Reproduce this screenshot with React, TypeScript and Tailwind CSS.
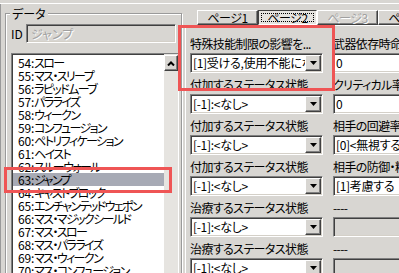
import React from 'react';

const listItems = [
  '54:スロー',
  '55:マス・スリープ',
  '56:ラピッドムーブ',
  '57:パラライズ',
  '58:ウィークン',
  '59:コンフュージョン',
  '60:ペトリフィケーション',
  '61:ヘイスト',
  '62:スルーウォール',
  '63:ジャンプ',
  '64:キャストブロック',
  '65:エンチャンテッドウェポン',
  '66:マス・マジックシールド',
  '67:マス・スロー',
  '68:マス・パラライズ',
  '69:マス・ウィークン',
  '70:マス・コンフュージョン',
];

type Field = { label: string; kind: 'combo' | 'input' | 'disabled'; value?: string };

const rows: [Field, Field][] = [
  [
    { label: '特殊技能制限の影響を...', kind: 'combo', value: '[1]受ける,使用不能になる' },
    { label: '武器依存時命中率', kind: 'input', value: '0' },
  ],
  [
    { label: '付加するステータス状態', kind: 'combo', value: '[-1]:<なし>' },
    { label: 'クリティカル率[%]', kind: 'input', value: '0' },
  ],
  [
    { label: '付加するステータス状態', kind: 'combo', value: '[-1]:<なし>' },
    { label: '相手の回避率を考慮', kind: 'combo', value: '[0]<無視する>' },
  ],
  [
    { label: '付加するステータス状態', kind: 'combo', value: '[-1]:<なし>' },
    { label: '相手の防御・精神力', kind: 'combo', value: '[1]考慮する' },
  ],
  [
    { label: '治療するステータス状態', kind: 'combo', value: '[-1]:<なし>' },
    { label: '----', kind: 'disabled' },
  ],
  [
    { label: '治療するステータス状態', kind: 'combo', value: '[-1]:<なし>' },
    { label: '----', kind: 'disabled' },
  ],
];

const sunken =
  'border border-t-[#808080] border-l-[#808080] border-r-white border-b-white shadow-[inset_1px_1px_0_#404040,inset_-1px_-1px_0_#d4d0c8]';
const raised =
  'border border-t-white border-l-white border-r-[#404040] border-b-[#404040] shadow-[inset_-1px_-1px_0_#808080]';

function DropButton() {
  return (
    <div className={`w-[16px] h-[16px] shrink-0 bg-[#d8d6d2] flex items-center justify-center ${raised}`}>
      <svg width="7" height="4" viewBox="0 0 7 4">
        <path d="M0 0 H7 L3.5 4 Z" fill="#000" />
      </svg>
    </div>
  );
}

function Control({ field }: { field: Field }) {
  if (field.kind === 'disabled') {
    return <div className={`h-[20px] bg-[#d8d6d2] ${sunken}`} />;
  }
  return (
    <div className={`h-[20px] flex items-center bg-white pl-[2px] pr-[1px] ${sunken}`}>
      <span className="flex-1 min-w-0 overflow-hidden whitespace-nowrap leading-[16px] tracking-[-0.3px]">
        {field.value}
      </span>
      {field.kind === 'combo' && <DropButton />}
    </div>
  );
}

function Tab({ label, state }: { label: string; state: 'normal' | 'pressed' | 'disabled' }) {
  if (state === 'pressed') {
    return (
      <div className="w-[59px] h-[15px] shrink-0 p-[2px] bg-[#e6e4e0] border border-t-[#404040] border-l-[#404040] border-r-white border-b-white">
        <div className="h-full border border-dotted border-black flex items-center justify-center leading-[11px] tracking-[-0.5px]">
          {label}
        </div>
      </div>
    );
  }
  return (
    <div
      className={`w-[61px] h-[15px] shrink-0 flex items-center justify-center leading-[13px] tracking-[-0.5px] bg-[#d8d6d2] ${raised} ${
        state === 'disabled' ? 'text-[#a0a0a0] [text-shadow:1px_1px_0_white]' : ''
      }`}
    >
      {label}
    </div>
  );
}

export default function App() {
  return (
    <div className="relative w-[399px] h-[273px] overflow-hidden bg-[#d8d6d2] pt-[3px] text-[12px] text-black font-['Noto_Sans_CJK_JP','Noto_Sans',sans-serif] [font-feature-settings:'palt']">
      <div className="flex h-[270px] border-t border-white">
        {/* left: data list */}
        <div className="w-[184px] shrink-0 border-l border-[#9a9a9a]">
          <fieldset className="mt-[1px] ml-[4px] w-[177px] h-[300px] border border-[#9a9a9a] shadow-[inset_1px_1px_0_white,1px_1px_0_white]">
            <legend className="ml-[4px] px-[2px] leading-[17px] bg-[#d8d6d2]">データ</legend>
            <div className="mt-[2px] flex items-center">
              <span className="ml-[5px] w-[15px] leading-[19px]">ID</span>
              <div className={`w-[150px] h-[19px] flex items-center pl-[4px] text-[#a0a0a0] [text-shadow:1px_1px_0_white] ${sunken}`}>
                ジャンプ
              </div>
            </div>
            <div className={`mt-[10px] ml-[5px] w-[168px] h-[230px] flex bg-white ${sunken}`}>
              <div className="flex-1 pt-[2px] pl-[1px] overflow-hidden">
                {listItems.map((item) => {
                  const [num, name] = item.split(':');
                  return (
                    <div
                      key={item}
                      className={`h-[13px] leading-[13px] pl-[5px] whitespace-nowrap ${
                        num === '63' ? 'bg-[#a7aab5]' : ''
                      }`}
                    >
                      <span className="tracking-[-0.2px]">{num}:</span>
                      <span className="tracking-[-1.6px]">{name}</span>
                    </div>
                  );
                })}
              </div>
              <div className="w-[14px] shrink-0 bg-[#e6e4e0] pt-[1px]">
                <div className={`w-[14px] h-[16px] bg-[#d8d6d2] flex items-center justify-center ${raised}`}>
                  <svg width="8" height="5" viewBox="0 0 8 5">
                    <path d="M1 4.5 L4 1.5 L7 4.5" fill="none" stroke="#000" strokeWidth="2" />
                  </svg>
                </div>
              </div>
            </div>
          </fieldset>
        </div>

        {/* right: pages */}
        <div className="flex-1 min-w-0 flex flex-col overflow-hidden">
          <div className="h-[21px] pt-[6px] pl-[13px] flex">
            <Tab label="ページ1" state="normal" />
            <Tab label="ページ2" state="pressed" />
            <Tab label="ページ3" state="disabled" />
            <Tab label="ページ4" state="normal" />
          </div>
          <div className="flex-1 ml-[1px] border-t border-l border-white pt-[9px] pl-[4px] flex flex-col gap-[3px]">
            {rows.map(([left, right], i) => (
              <div key={i} className="flex gap-[10px]">
                <div className="w-[133px] shrink-0">
                  <div className="h-[18px] leading-[18px] whitespace-nowrap overflow-hidden tracking-[-0.6px]">
                    {left.label}
                  </div>
                  <Control field={left} />
                </div>
                <div className="w-[140px] shrink-0">
                  <div className="h-[18px] leading-[18px] whitespace-nowrap overflow-hidden tracking-[-0.6px]">
                    {right.label}
                  </div>
                  <Control field={right} />
                </div>
              </div>
            ))}
          </div>
        </div>
      </div>

      {/* highlight boxes */}
      <div className="absolute left-[178px] top-[25px] w-[157px] h-[66px] border-[3px] border-[#ef5555]" />
      <div className="absolute left-[4px] top-[167px] w-[168px] h-[26px] border-[3px] border-[#ef5555]" />
    </div>
  );
}
